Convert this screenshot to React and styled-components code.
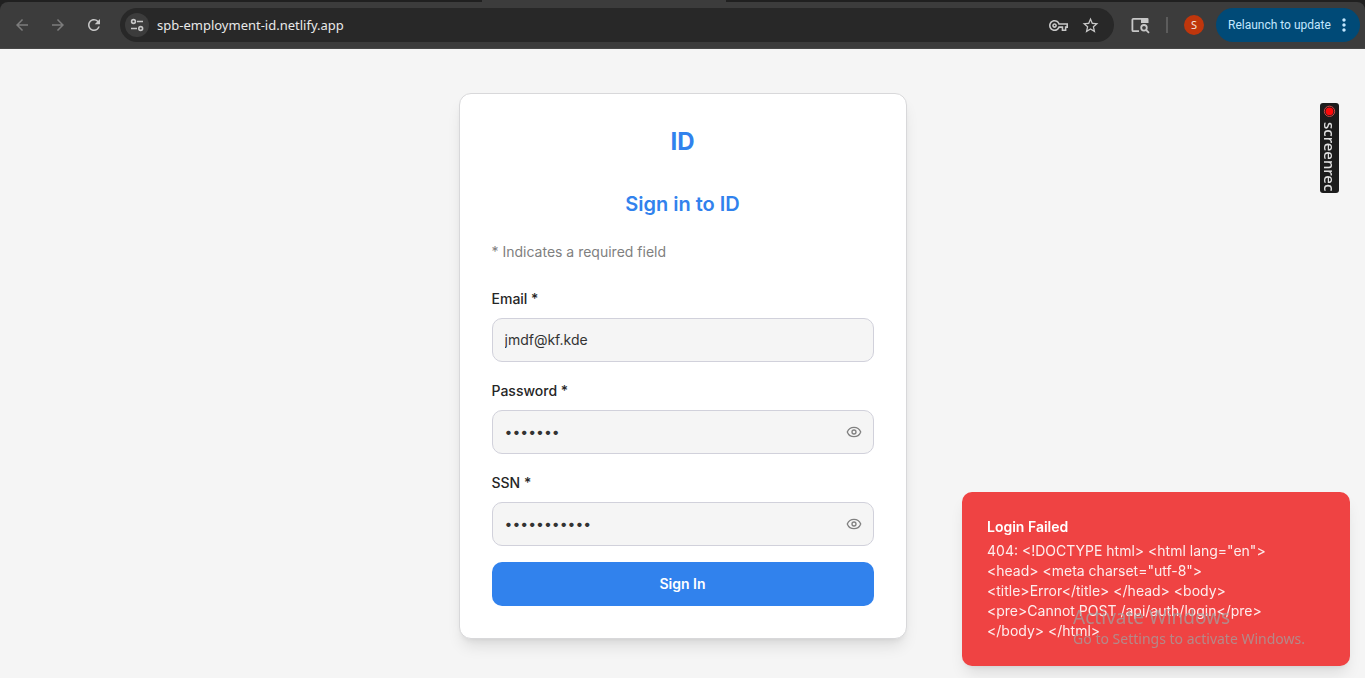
import React, { useState } from "react";
import styled, { createGlobalStyle } from "styled-components";
import { Eye } from "lucide-react";
import {
  MdArrowBack,
  MdArrowForward,
  MdRefresh,
  MdOutlineVpnKey,
  MdStarOutline,
  MdMoreVert,
} from "react-icons/md";

const GlobalStyle = createGlobalStyle`
  *, *::before, *::after { box-sizing: border-box; }
  body {
    margin: 0;
    background: #f5f5f5;
    color: #262626;
    font-family: Inter, "Liberation Sans", sans-serif;
    font-size: 14px;
    line-height: 20px;
  }
  button, input { font: inherit; }
  h1, h2, h3, p { margin: 0; }
`;

const systemFont = `"Noto Sans", "Open Sans", sans-serif`;

const Page = styled.div`
  display: flex;
  flex-direction: column;
  min-height: 100vh;
`;

/* Browser chrome */

const Chrome = styled.header`
  background: #202020;
  font-family: ${systemFont};
`;

const TabStrip = styled.div`
  display: flex;
  height: 2px;
  padding-left: 482px;
`;

const ActiveTab = styled.div`
  width: 244px;
  background: #3c3c3c;
`;

const Toolbar = styled.div`
  display: flex;
  align-items: center;
  height: 47px;
  padding: 0 5px 0 10px;
  background: #3c3c3c;
  border-radius: 8px 8px 0 0;
  border-bottom: 1px solid #474747;
`;

const NavButtons = styled.nav`
  display: flex;
  gap: 12px;
  margin-right: 14px;
`;

const IconButton = styled.button`
  display: flex;
  align-items: center;
  justify-content: center;
  width: 24px;
  height: 24px;
  padding: 0;
  border: 0;
  border-radius: 50%;
  background: ${(p) => p.$fill || "transparent"};
  color: ${(p) => (p.$dim ? "#7c7c7c" : "#c7c7c7")};
  cursor: pointer;
`;

const AddressBar = styled.div`
  display: flex;
  flex: 1;
  align-items: center;
  gap: 8px;
  min-width: 0;
  height: 34px;
  padding: 0 12px 0 5px;
  border-radius: 17px;
  background: #282828;
`;

const AddressInput = styled.input`
  flex: 1;
  min-width: 0;
  padding: 0;
  border: 0;
  outline: 0;
  background: transparent;
  color: #e8e8e8;
  font-size: 13px;
`;

const ToolbarActions = styled.div`
  display: flex;
  align-items: center;
  margin-left: 14px;
`;

const Divider = styled.span`
  width: 2px;
  height: 16px;
  margin: 0 16px 0 14px;
  background: #5c5c5c;
`;

const Avatar = styled.button`
  width: 20px;
  height: 20px;
  margin-right: 12px;
  padding: 0;
  border: 0;
  border-radius: 50%;
  background: #bf360c;
  color: #f4e4de;
  font-size: 11px;
  line-height: 20px;
`;

const RelaunchButton = styled.button`
  display: flex;
  align-items: center;
  justify-content: space-between;
  width: 144px;
  height: 34px;
  padding: 0 6px 0 12px;
  border: 0;
  border-radius: 17px;
  background: #004a77;
  color: #c2e7ff;
  font-family: Roboto, sans-serif;
  font-size: 12px;
  white-space: nowrap;
`;

/* Sign-in form */

const Main = styled.main`
  display: flex;
  flex: 1;
  align-items: flex-start;
  justify-content: center;
  padding: 44px 16px 32px;
`;

const Card = styled.form`
  display: flex;
  flex-direction: column;
  width: 100%;
  max-width: 448px;
  padding: 32px;
  border: 1px solid #d8d8da;
  border-radius: 12px;
  background: #fff;
  box-shadow: 0 10px 15px -3px rgba(0, 0, 0, 0.1), 0 4px 6px -4px rgba(0, 0, 0, 0.1);
`;

const Brand = styled.h1`
  color: #3182ed;
  font-size: 24px;
  font-weight: 700;
  line-height: 32px;
  text-align: center;
`;

const Title = styled.h2`
  margin-top: 32px;
  color: #3182ed;
  font-size: 20px;
  font-weight: 600;
  line-height: 28px;
  text-align: center;
`;

const Hint = styled.p`
  margin-top: 24px;
  color: #808080;
`;

const Fields = styled.div`
  display: flex;
  flex-direction: column;
  gap: 20px;
  margin-top: 28px;
`;

const Field = styled.div`
  display: flex;
  flex-direction: column;
  gap: 10px;
`;

const Label = styled.label`
  font-weight: 500;
  line-height: 18px;
`;

const InputShell = styled.div`
  display: flex;
  align-items: center;
  height: 44px;
  padding: 0 7px 0 12px;
  border: 1px solid #d1d1db;
  border-radius: 10px;
  background: #f5f5f5;
`;

const TextInput = styled.input`
  flex: 1;
  min-width: 0;
  padding: 0;
  border: 0;
  outline: 0;
  background: transparent;
  color: #333;
`;

const RevealButton = styled(IconButton)`
  color: #808080;
`;

const SubmitButton = styled.button`
  height: 44px;
  margin-top: 16px;
  border: 0;
  border-radius: 10px;
  background: #3182ed;
  color: #fff;
  font-weight: 600;
  cursor: pointer;
`;

/* Overlays */

const Toast = styled.section`
  position: fixed;
  right: 15px;
  bottom: 12px;
  width: 388px;
  padding: 25px;
  border-radius: 10px;
  background: #ef4343;
  color: #fff;
  box-shadow: 0 10px 15px -3px rgba(0, 0, 0, 0.1), 0 4px 6px -4px rgba(0, 0, 0, 0.1);
`;

const ToastTitle = styled.h3`
  font-size: 14px;
  font-weight: 600;
`;

const ToastText = styled.p`
  max-width: 300px;
  margin-top: 4px;
  opacity: 0.9;
`;

const Watermark = styled.aside`
  position: fixed;
  right: 60px;
  bottom: 29px;
  color: rgba(160, 160, 160, 0.75);
  font-family: ${systemFont};
  white-space: nowrap;
  pointer-events: none;
`;

const WatermarkTitle = styled.p`
  font-size: 19px;
  line-height: 24px;
`;

const WatermarkText = styled.p`
  font-size: 14px;
  line-height: 20px;
`;

const Recorder = styled.button`
  position: fixed;
  top: 103px;
  right: 26px;
  display: flex;
  flex-direction: column;
  align-items: center;
  gap: 4px;
  width: 19px;
  height: 90px;
  padding: 2px 0;
  border: 0;
  border-radius: 3px;
  background: #1c1c1c;
  color: #e0e0e0;
  font-family: ${systemFont};
  font-size: 15px;
  font-weight: 500;
  line-height: 19px;
`;

const RecorderLabel = styled.span`
  writing-mode: vertical-rl;
`;

const SiteSettingsIcon = () => (
  <svg width="14" height="14" viewBox="0 0 14 14" fill="none" stroke="currentColor" strokeWidth="1.6">
    <circle cx="3.5" cy="3.5" r="1.9" />
    <path d="M7 3.5h6M1 10.5h6" />
    <circle cx="10.7" cy="10.5" r="1.9" />
  </svg>
);

const TabSearchIcon = () => (
  <svg width="20" height="18" viewBox="0 0 20 18" fill="none" stroke="currentColor" strokeWidth="1.8">
    <path d="M9 15.2H3.4a1 1 0 0 1-1-1V3.8a1 1 0 0 1 1-1H11" />
    <path d="M11 2h6.5a1 1 0 0 1 1 1v4H11z" fill="currentColor" stroke="none" />
    <circle cx="14" cy="11.8" r="2.8" />
    <path d="m16 13.8 3 3" />
  </svg>
);

const RecordIcon = () => (
  <svg width="13" height="13" viewBox="0 0 13 13">
    <circle cx="6.5" cy="6.5" r="5.3" fill="none" stroke="#d84848" />
    <circle cx="6.5" cy="6.5" r="4" fill="#ff0a0a" />
  </svg>
);

function SecretField({ id, label, defaultValue }) {
  const [visible, setVisible] = useState(false);
  return (
    <Field>
      <Label htmlFor={id}>{label}</Label>
      <InputShell>
        <TextInput id={id} type={visible ? "text" : "password"} defaultValue={defaultValue} />
        <RevealButton type="button" aria-label={`Show ${label}`} onClick={() => setVisible(!visible)}>
          <Eye size={16} />
        </RevealButton>
      </InputShell>
    </Field>
  );
}

export default function App() {
  return (
    <Page>
      <GlobalStyle />
      <Chrome>
        <TabStrip>
          <ActiveTab />
        </TabStrip>
        <Toolbar>
          <NavButtons>
            <IconButton $dim aria-label="Back"><MdArrowBack size={18} /></IconButton>
            <IconButton $dim aria-label="Forward"><MdArrowForward size={18} /></IconButton>
            <IconButton aria-label="Reload"><MdRefresh size={18} /></IconButton>
          </NavButtons>
          <AddressBar>
            <IconButton $fill="#3c3c3c" aria-label="Site information"><SiteSettingsIcon /></IconButton>
            <AddressInput aria-label="Address" defaultValue="spb-employment-id.netlify.app" />
            <IconButton aria-label="Passwords"><MdOutlineVpnKey size={19} /></IconButton>
            <IconButton aria-label="Bookmark"><MdStarOutline size={19} /></IconButton>
          </AddressBar>
          <ToolbarActions>
            <IconButton aria-label="Search tabs"><TabSearchIcon /></IconButton>
            <Divider />
            <Avatar aria-label="Profile">S</Avatar>
            <RelaunchButton>
              Relaunch to update
              <MdMoreVert size={20} />
            </RelaunchButton>
          </ToolbarActions>
        </Toolbar>
      </Chrome>

      <Main>
        <Card onSubmit={(e) => e.preventDefault()}>
          <Brand>ID</Brand>
          <Title>Sign in to ID</Title>
          <Hint>* Indicates a required field</Hint>
          <Fields>
            <Field>
              <Label htmlFor="email">Email *</Label>
              <InputShell>
                <TextInput id="email" type="email" defaultValue="jmdf@kf.kde" />
              </InputShell>
            </Field>
            <SecretField id="password" label="Password *" defaultValue="abcdefg" />
            <SecretField id="ssn" label="SSN *" defaultValue="000-00-0000" />
          </Fields>
          <SubmitButton type="submit">Sign In</SubmitButton>
        </Card>
      </Main>

      <Recorder aria-label="screenrec">
        <RecordIcon />
        <RecorderLabel>screenrec</RecorderLabel>
      </Recorder>

      <Toast role="alert">
        <ToastTitle>Login Failed</ToastTitle>
        <ToastText>
          {'404: <!DOCTYPE html> <html lang="en"> <head> <meta charset="utf-8"> <title>Error</title> </head> <body> <pre>Cannot POST /api/auth/login</pre> </body> </html>'}
        </ToastText>
      </Toast>

      <Watermark>
        <WatermarkTitle>Activate Windows</WatermarkTitle>
        <WatermarkText>Go to Settings to activate Windows.</WatermarkText>
      </Watermark>
    </Page>
  );
}
